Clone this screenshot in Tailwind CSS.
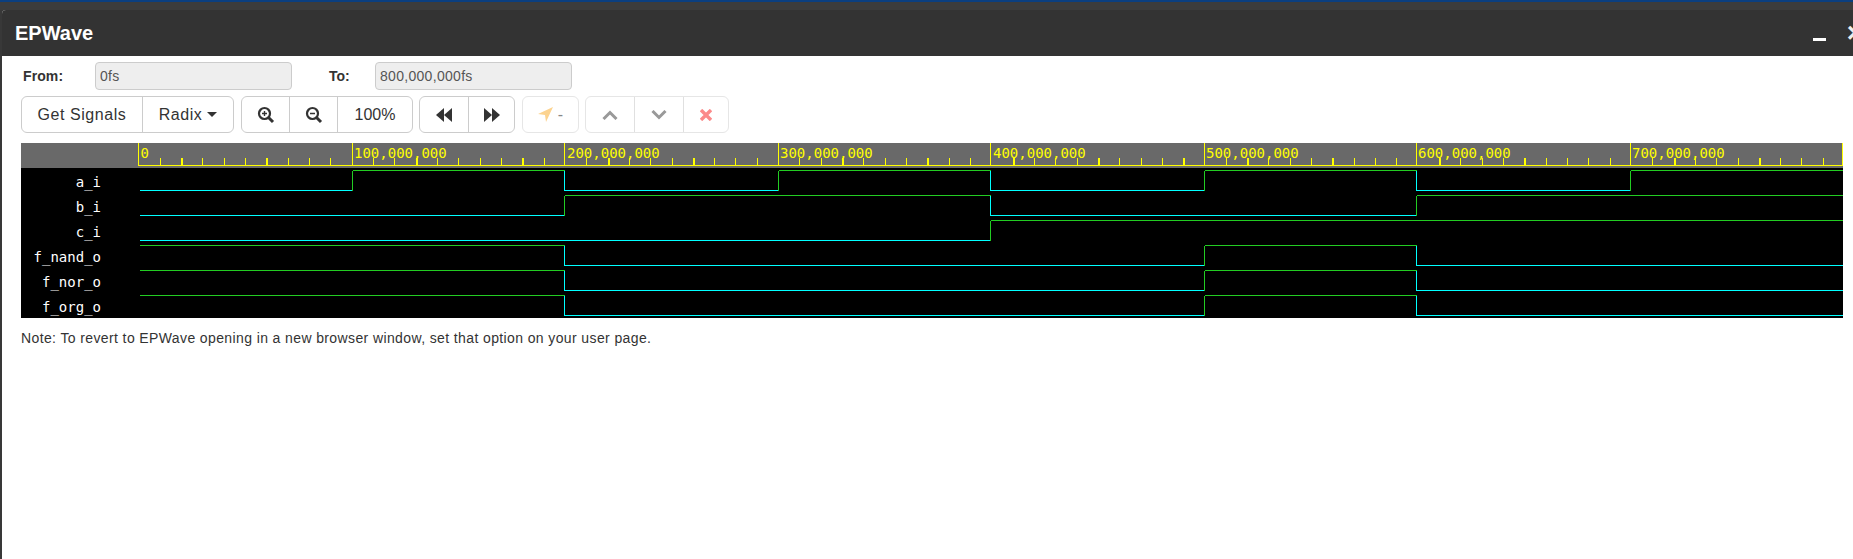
<!DOCTYPE html>
<html lang="en">
<head>
    <meta charset="UTF-8">
    <meta name="viewport" content="width=device-width, initial-scale=1.0">
    <title>EPWave</title>
    <script src="https://cdn.jsdelivr.net/npm/@tailwindcss/browser@4"></script>
</head>
<body class="bg-[#383838] overflow-hidden font-['Liberation_Sans',Arial,sans-serif]">
<div class="h-[559px] w-[1853px] overflow-hidden flex flex-col">
    <!-- page behind the window -->
    <div class="h-[2px] bg-[#0b3f80]"></div>
    <div class="h-[8px] bg-[#3c3c3c]"></div>

    <!-- EPWave window -->
    <div class="flex-1 ml-[2px] w-[1866px] flex flex-col bg-white rounded-tl-[4px] overflow-hidden">
        <div class="h-[46px] shrink-0 bg-[#333333] flex items-center pl-[13px] text-white">
            <span class="text-[20px] leading-[36px] font-bold">EPWave</span>
            <span class="ml-auto mt-[12px] w-[13px] h-[3px] bg-white"></span>
            <span class="ml-[21px] mr-[5px] mt-[-1px] text-[28px] leading-none font-bold text-[#eeeeee]">×</span>
        </div>

        <div class="pl-[19px] flex flex-col text-[#333333]">
            <!-- time range -->
            <div class="mt-[6px] flex items-center h-[28px] text-[14px]">
                <label class="w-[74px] pl-[2px] font-bold tracking-[0.1px]">From:</label>
                <input disabled value="0fs" class="w-[197px] h-[28px] px-[4px] bg-[#eeeeee] border border-[#cccccc] rounded-[4px] text-[#555555] text-[14px] tracking-[0.3px]">
                <label class="w-[46px] ml-[37px] font-bold">To:</label>
                <input disabled value="800,000,000fs" class="w-[197px] h-[28px] px-[4px] bg-[#eeeeee] border border-[#cccccc] rounded-[4px] text-[#555555] text-[14px] tracking-[0.3px]">
            </div>

            <!-- toolbar -->
            <div class="mt-[6px] flex h-[37px] text-[16px]">
                <div class="flex w-[213px] border border-[#cccccc] rounded-[6px]">
                    <button class="w-[120px] flex items-center justify-center tracking-[0.55px]">Get Signals</button>
                    <button class="flex-1 flex items-center justify-center gap-[5px] border-l border-[#cccccc] tracking-[0.5px]">Radix
                        <svg width="10" height="5" viewBox="0 0 10 5"><polygon points="0,0 10,0 5,5" fill="#333"/></svg>
                    </button>
                </div>
                <div class="ml-[7px] flex w-[172px] border border-[#cccccc] rounded-[6px]">
                    <button class="w-[47px] flex items-center justify-center">
                        <svg width="18" height="18" viewBox="0 0 18 18" fill="none" stroke="#333"><circle cx="7.5" cy="7.5" r="5.5" stroke-width="2.2"/><path d="M11.500 11.500L16 16" stroke-width="3"/><path d="M5 7.500h5M7.500 5v5" stroke-width="1.4"/></svg>
                    </button>
                    <button class="w-[48px] flex items-center justify-center border-l border-[#cccccc]">
                        <svg width="18" height="18" viewBox="0 0 18 18" fill="none" stroke="#333"><circle cx="7.5" cy="7.5" r="5.5" stroke-width="2.2"/><path d="M11.500 11.500L16 16" stroke-width="3"/><path d="M5 7.500h5" stroke-width="1.6"/></svg>
                    </button>
                    <button class="flex-1 flex items-center justify-center border-l border-[#cccccc]">100%</button>
                </div>
                <div class="ml-[6px] flex w-[96px] border border-[#cccccc] rounded-[6px]">
                    <button class="w-[48px] flex items-center justify-center">
                        <svg width="16" height="14" viewBox="0 0 16 14" fill="#333"><polygon points="0,7 8,0 8,14"/><polygon points="8,7 16,0 16,14"/></svg>
                    </button>
                    <button class="flex-1 flex items-center justify-center border-l border-[#cccccc]">
                        <svg width="16" height="14" viewBox="0 0 16 14" fill="#333"><polygon points="0,0 8,7 0,14"/><polygon points="8,0 16,7 8,14"/></svg>
                    </button>
                </div>
                <div class="ml-[7px] flex w-[57px] items-center justify-center gap-[5px] border border-[#e6e6e6] rounded-[6px]">
                    <svg width="15" height="15" viewBox="0 0 15 15" fill="#fcd38f"><polygon points="0,7 15,0 8,15 7,8"/></svg>
                    <span class="text-[#888888]">-</span>
                </div>
                <div class="ml-[6px] flex w-[144px] border border-[#e6e6e6] rounded-[6px]">
                    <button class="w-[48px] flex items-center justify-center">
                        <svg width="16" height="10" viewBox="0 0 16 10" fill="none" stroke="#999" stroke-width="3"><path d="M1.500 9L8 2.500L14.500 9"/></svg>
                    </button>
                    <button class="w-[49px] flex items-center justify-center border-l border-[#e0e0e0]">
                        <svg width="16" height="10" viewBox="0 0 16 10" fill="none" stroke="#999" stroke-width="3"><path d="M1.500 1L8 7.500L14.500 1"/></svg>
                    </button>
                    <button class="flex-1 flex items-center justify-center border-l border-[#e0e0e0]">
                        <svg width="12" height="12" viewBox="0 0 12 12" fill="none" stroke="#fb8a8a" stroke-width="3.4"><path d="M1 1L11 11M11 1L1 11"/></svg>
                    </button>
                </div>
            </div>

            <!-- waves -->
            <svg id="wave" class="mt-[10px] block" width="1822" height="175" viewBox="21 143 1822 175" font-family="'DejaVu Sans Mono', monospace" font-size="14" shape-rendering="crispEdges">
                <rect x="21" y="143" width="1822" height="25" fill="#696969"/>
                <rect x="21" y="168" width="1822" height="150" fill="#000"/>
                <g id="ticks" stroke="#ffff00"></g>
                <g id="lines" fill="none" stroke-width="1"></g>
                <g fill="#ffff00">
                    <text x="140.500" y="158">0</text>
                    <text x="354" y="158">100,000,000</text>
                    <text x="567" y="158">200,000,000</text>
                    <text x="780" y="158">300,000,000</text>
                    <text x="993" y="158">400,000,000</text>
                    <text x="1206" y="158">500,000,000</text>
                    <text x="1418" y="158">600,000,000</text>
                    <text x="1632" y="158">700,000,000</text>
                </g>
                <g fill="#fff" text-anchor="end">
                    <text x="101" y="187">a_i</text>
                    <text x="101" y="212">b_i</text>
                    <text x="101" y="237">c_i</text>
                    <text x="101" y="262">f_nand_o</text>
                    <text x="101" y="287">f_nor_o</text>
                    <text x="101" y="312">f_org_o</text>
                </g>
            </svg>

            <p class="mt-[10px] text-[14px] leading-[20px] tracking-[0.385px]">Note: To revert to EPWave opening in a new browser window, set that option on your user page.</p>
        </div>
    </div>
</div>

<script>
    const NS = "http://www.w3.org/2000/svg";
    const GREEN = "#22cc22";
    const CYAN = "#00ffff";

    function addLine(parent, x1, y1, x2, y2, color, width) {
        const l = document.createElementNS(NS, "line");
        l.setAttribute("x1", x1);
        l.setAttribute("y1", y1);
        l.setAttribute("x2", x2);
        l.setAttribute("y2", y2);
        if (color) l.setAttribute("stroke", color);
        if (width) l.setAttribute("stroke-width", width);
        parent.appendChild(l);
    }

    // Time axis
    const ticks = document.getElementById("ticks");
    const majors = [138, 352, 564, 778, 990, 1204, 1416, 1630, 1842];
    const thick = [181, 266, 416, 522, 607, 692, 842, 927, 1012, 1097, 1182, 1247, 1332, 1438, 1523, 1608, 1673, 1758];
    addLine(ticks, 138, 165.5, 1843, 165.5, null, 1);
    majors.forEach((x) => addLine(ticks, x + 0.5, 143, x + 0.5, 166, null, 1));
    for (let i = 0; i < 80; i++) {
        const x = Math.round(138.5 + i * 21.32);
        if (i % 10 === 0) continue;
        const isThick = thick.some((t) => Math.abs(t - x) <= 1);
        addLine(ticks, isThick ? x + 1 : x + 0.5, 158, isThick ? x + 1 : x + 0.5, 165, null, isThick ? 2 : 1);
    }

    // Signal levels per 100,000,000 step
    const signals = [
        [0, 1, 0, 1, 0, 1, 0, 1],
        [0, 0, 1, 1, 0, 0, 1, 1],
        [0, 0, 0, 0, 1, 1, 1, 1],
        [1, 1, 0, 0, 0, 1, 0, 0],
        [1, 1, 0, 0, 0, 1, 0, 0],
        [1, 1, 0, 0, 0, 1, 0, 0],
    ];
    const edges = [140, 352, 564, 778, 990, 1204, 1416, 1630, 1843];
    const lines = document.getElementById("lines");

    signals.forEach((levels, row) => {
        const high = 170.5 + row * 25;
        const low = high + 20;
        levels.forEach((level, i) => {
            const y = level ? high : low;
            const start = i === 0 ? edges[0] : edges[i] + 1;
            addLine(lines, start, y, edges[i + 1] === 1843 ? 1843 : edges[i + 1] + 1, y, level ? GREEN : CYAN);
            if (i > 0 && levels[i - 1] !== level) {
                addLine(lines, edges[i] + 0.5, high, edges[i] + 0.5, low, level ? GREEN : CYAN);
            }
        });
    });
</script>
</body>
</html>
